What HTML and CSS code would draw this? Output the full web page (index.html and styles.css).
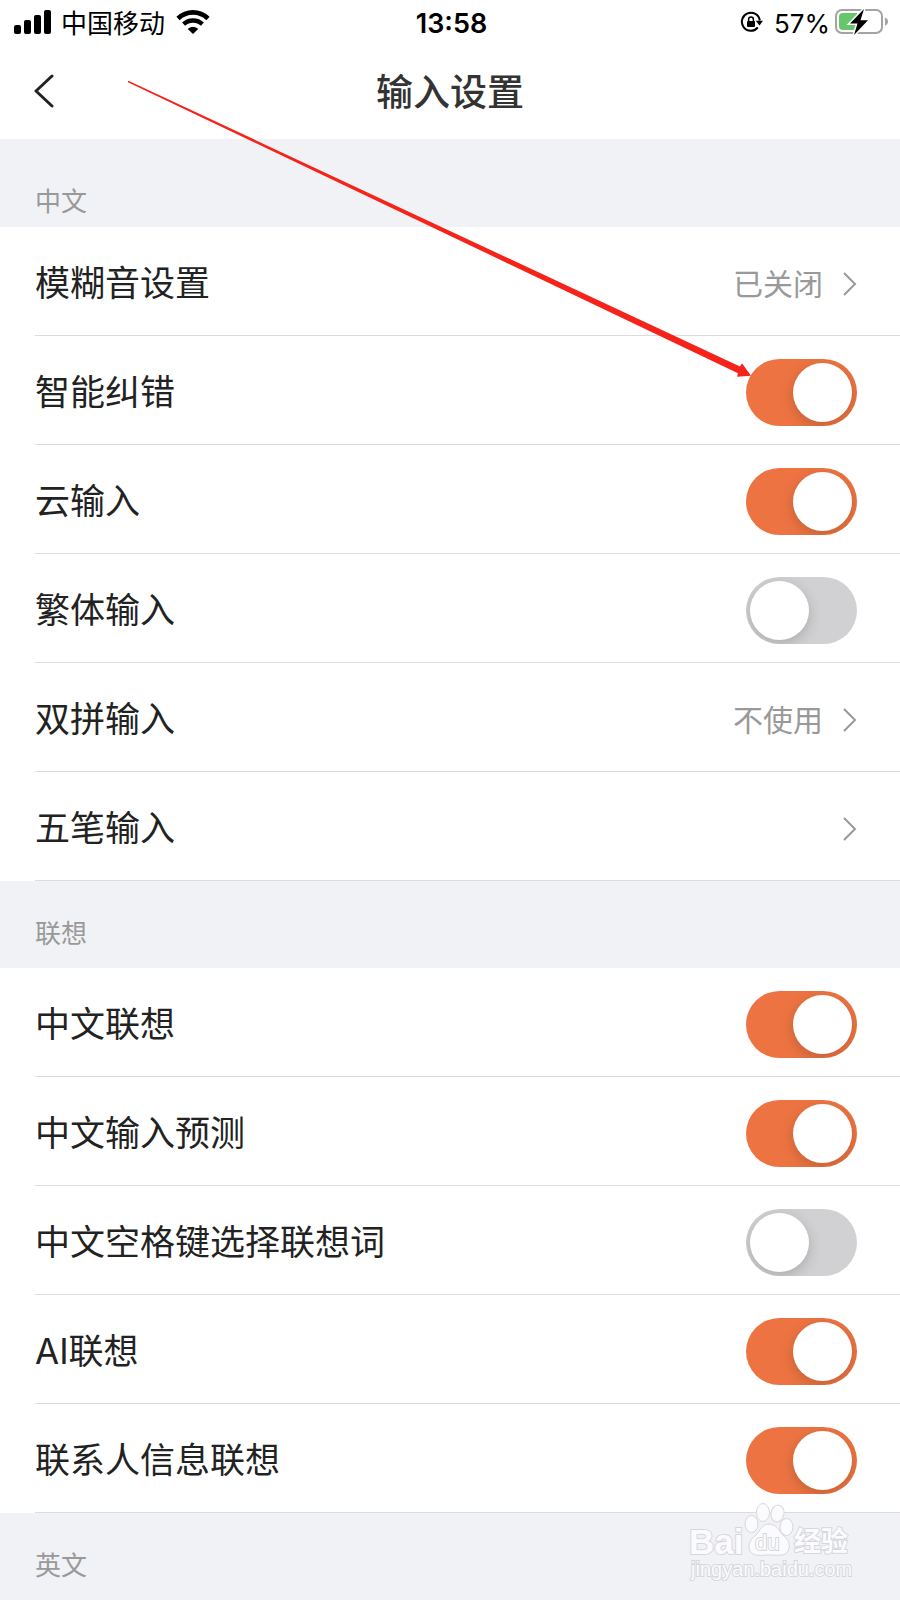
FILE: index.html
```
<!DOCTYPE html>
<html lang="zh-CN">
<head>
  <meta charset="UTF-8">
  <meta name="viewport" content="width=device-width, initial-scale=1.0">
  <title>输入设置</title>
  <link rel="stylesheet" href="styles.css">
</head>
<body>
  <div class="screen">
    <div class="status-bar">
      <div class="status-left">
        <svg class="signal" width="38" height="24" viewBox="0 0 38 24">
          <rect x="0" y="15" width="7" height="9" rx="2"/>
          <rect x="10" y="10" width="7" height="14" rx="2"/>
          <rect x="20" y="5" width="7" height="19" rx="2"/>
          <rect x="30" y="0" width="7" height="24" rx="2"/>
        </svg>
        <span class="carrier">中国移动</span>
        <svg class="wifi" width="34" height="24" viewBox="0 0 34 24">
          <path d="M2 8.5C10.500 .3 23.500 .3 32 8.500" fill="none" stroke="#000" stroke-width="4.600"/>
          <path d="M7.600 14.200C12.800 9.200 21.200 9.200 26.400 14.200" fill="none" stroke="#000" stroke-width="4.400"/>
          <path d="M17 24L11.800 18.900C14.800 16.300 19.200 16.300 22.200 18.900Z"/>
        </svg>
      </div>
      <span class="time">13:58</span>
      <div class="status-right">
        <svg width="24" height="22" viewBox="0 0 24 22">
          <path d="M17.800 16.500A9 9 0 1 1 19.800 9.500" fill="none" stroke="#000" stroke-width="2"/>
          <path d="M15.800 9.800H23L19.500 14.600Z"/>
          <rect x="7" y="10" width="8" height="6" rx="1"/>
          <path d="M8.600 10.500V8.400a2.400 2.400 0 0 1 4.800 0V10.500" fill="none" stroke="#000" stroke-width="1.500"/>
        </svg>
        <span class="percent">57%</span>
        <svg width="54" height="26" viewBox="0 0 54 26">
          <rect x="1" y="1" width="46" height="23" rx="6" fill="#fff" stroke="#a3a3a5" stroke-width="2"/>
          <path d="M8 4H22V21H8Q4 21 4 17V8Q4 4 8 4Z" fill="#66c66b"/>
          <path d="M50 8.500Q53 9.500 53 12.500T50 16.500Z" fill="#a3a3a5"/>
          <path d="M29 0L15 14.500H22.500L19 26L33 11.200H25.500Z" stroke="#fff" stroke-width="3" paint-order="stroke"/>
        </svg>
      </div>
    </div>

    <header class="nav">
      <button class="back" aria-label="返回">
        <svg width="20" height="36" viewBox="0 0 20 36">
          <path d="M18 2L2 17L18 32" fill="none" stroke="#222" stroke-width="3" stroke-linecap="round" stroke-linejoin="round"/>
        </svg>
      </button>
      <h1>输入设置</h1>
    </header>

    <h2>中文</h2>
    <div class="group">
      <a class="row" href="#">
        <span>模糊音设置</span>
        <span class="value">已关闭</span>
        <svg class="arrow" width="14" height="24" viewBox="0 0 14 24"><path d="M1 1L12 12L1 23"/></svg>
      </a>
      <label class="row"><span>智能纠错</span><input class="switch" type="checkbox" checked></label>
      <label class="row"><span>云输入</span><input class="switch" type="checkbox" checked></label>
      <label class="row"><span>繁体输入</span><input class="switch" type="checkbox"></label>
      <a class="row" href="#">
        <span>双拼输入</span>
        <span class="value">不使用</span>
        <svg class="arrow" width="14" height="24" viewBox="0 0 14 24"><path d="M1 1L12 12L1 23"/></svg>
      </a>
      <a class="row" href="#">
        <span>五笔输入</span>
        <svg class="arrow" width="14" height="24" viewBox="0 0 14 24"><path d="M1 1L12 12L1 23"/></svg>
      </a>
    </div>

    <h2>联想</h2>
    <div class="group">
      <label class="row"><span>中文联想</span><input class="switch" type="checkbox" checked></label>
      <label class="row"><span>中文输入预测</span><input class="switch" type="checkbox" checked></label>
      <label class="row"><span>中文空格键选择联想词</span><input class="switch" type="checkbox"></label>
      <label class="row"><span>AI联想</span><input class="switch" type="checkbox" checked></label>
      <label class="row"><span>联系人信息联想</span><input class="switch" type="checkbox" checked></label>
    </div>

    <h2>英文</h2>

    <!-- red pointer to the 智能纠错 switch -->
    <svg class="pointer" width="626" height="298" viewBox="0 0 626 298">
      <path d="M0 0L1 0L612 285.500L614 282.300L623 294.700L609 295.700L610 292.200L0 1.200Z" fill="#f5231a"/>
    </svg>

    <svg class="watermark" width="176" height="90" viewBox="0 0 176 90">
      <g class="mark">
        <ellipse cx="63.500" cy="27" rx="6.500" ry="8.500"/>
        <ellipse cx="75" cy="15.500" rx="6.500" ry="9"/>
        <ellipse cx="89.500" cy="16.500" rx="6.500" ry="8.500" transform="rotate(12 89.500 16.500)"/>
        <ellipse cx="98.500" cy="30" rx="6.500" ry="8.500"/>
        <path d="M81 27C89 27 91 34 95 38C101 43 103 48 100 54C97 60 88 58 81 58C74 58 65 60 62 54C59 47 63 42 68 38C72 34 74 27 81 27Z"/>
        <text class="bai" x="1" y="57">Bai</text>
        <text class="du" x="67" y="53">du</text>
        <text class="jy" x="106" y="54">经验</text>
        <text class="url" x="3" y="79">jingyan.baidu.com</text>
      </g>
    </svg>
  </div>
</body>
</html>
```

FILE: styles.css
```
* { box-sizing: border-box; }
body { margin: 0; background: #f1f2f6; color: #222; font-family: Inter, "Noto Sans CJK SC", sans-serif; }
.screen { position: relative; overflow: hidden; min-height: 100vh; }

.status-bar { display: grid; grid-template-columns: 1fr auto 1fr; align-items: center; height: 44px; padding: 0 11px 0 14px; background: #fff; color: #000; font-size: 26px; line-height: 30px; }
.status-bar span { padding-top: 3px; }
.status-left, .status-right { display: flex; align-items: center; }
.status-right { justify-content: flex-end; }
.carrier { margin: 0 11px 0 9px; }
.time { font-size: 27px; font-weight: 600; }
.percent { margin: 0 5px 0 10px; }

.nav { display: grid; grid-template-columns: 1fr auto 1fr; align-items: center; height: 95px; padding: 0 34px; background: #fff; }
.back { justify-self: start; display: flex; padding: 0; border: none; background: none; cursor: pointer; }
h1 { margin: 0; padding-top: 3px; font-size: 37px; font-weight: 500; line-height: 44px; color: #333; }

h2 { height: 87px; margin: 0; padding: 36px 35px 0; font-size: 26px; font-weight: 400; line-height: 34px; color: #999; }
.nav + h2 { height: 88px; padding-top: 46px; }

.group { padding-left: 35px; background: #fff; }
.row { display: flex; align-items: center; height: 109px; padding: 5px 43px 0 0; border-bottom: 1px solid #dcdcde; color: #222; font-size: 35px; line-height: 44px; text-decoration: none; cursor: pointer; }
.row span:first-child { flex: 1; padding-bottom: 2px; }
.row .value { margin-right: 20px; font-size: 30px; color: #999; }
.arrow path { fill: none; stroke: #999; stroke-width: 2; }

.switch { appearance: none; position: relative; width: 111px; height: 67px; margin: 0; border-radius: 34px; background: #d1d1d3; overflow: hidden; cursor: pointer; }
.switch::before { content: ""; position: absolute; top: 4px; left: 4px; width: 59px; height: 59px; border-radius: 50%; background: #fff; box-shadow: 0 4px 14px rgba(0,0,0,0.18); }
.switch:checked { background: #ed7442; }
.switch:checked::before { left: 47px; }

.pointer { position: absolute; top: 81px; left: 128px; pointer-events: none; }

.watermark { position: absolute; right: 36px; bottom: 13px; pointer-events: none; }
.mark { fill: #fbfbfd; stroke: #d6d7dc; stroke-width: 1; }
.mark text { font-family: "Liberation Sans", "Noto Sans CJK SC", sans-serif; paint-order: stroke; stroke-width: 2; }
.mark .bai { font-size: 35px; font-weight: 700; }
.mark .du { font-size: 22px; }
.mark .jy { font-size: 27px; font-weight: 700; }
.mark .url { font-size: 20px; }
```
